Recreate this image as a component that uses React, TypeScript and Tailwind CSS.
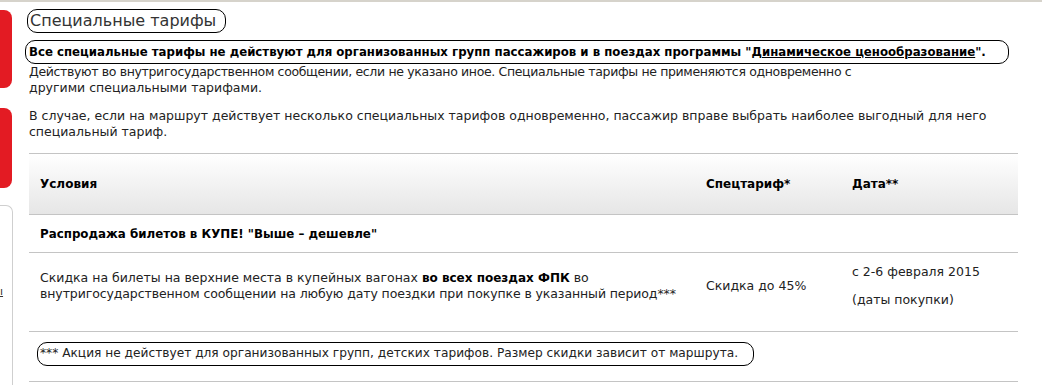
import React from "react";

const font = { fontFamily: '"DejaVu Sans", Verdana, sans-serif' };

export default function App() {
  return (
    <div
      className="w-[1042px] h-[385px] overflow-hidden bg-white text-[12.5px] leading-[16px] text-[#222] border-t-2 border-[#d6d3cb] flex"
      style={font}
    >
      {/* left sidebar */}
      <div className="w-[13px] shrink-0 flex flex-col">
        <div className="mt-[8px] h-[78px] w-[12px] rounded-r-[8px] bg-[#e31b23]" />
        <div className="mt-[20px] h-[80px] w-[12px] rounded-r-[8px] bg-[#e31b23]" />
        <div className="mt-[17px] flex-1 border-t border-r border-[#cfcfcf] rounded-tr-[7px] relative">
          <span className="absolute left-[0px] top-[78px] text-[11px] underline text-[#333]">ı</span>
        </div>
      </div>

      {/* main */}
      <div className="flex-1 flex flex-col">
        <div className="mt-[7px] ml-[14px] self-start h-[24px] pl-[2px] pr-[9px] border border-black rounded-[10px] text-[16px] leading-[22px] text-[#333]">
          Специальные тарифы
        </div>
        <div className="mt-[7px] ml-[12px] w-[984px] h-[24px] border border-black rounded-[10px] pl-[3px] text-[11.75px] leading-[22px] font-bold text-black whitespace-nowrap">
          Все специальные тарифы не действуют для организованных групп пассажиров и в поездах программы "
          <span className="underline">Динамическое ценообразование</span>".
        </div>
        <div className="ml-[16px] whitespace-nowrap">
          <div className="tracking-[-0.35px]">
            Действуют во внутригосударственном сообщении, если не указано иное. Специальные тарифы не применяются одновременно с
          </div>
          <div>другими специальными тарифами.</div>
        </div>
        <div className="mt-[12px] ml-[16px] whitespace-nowrap">
          <div>В случае, если на маршрут действует несколько специальных тарифов одновременно, пассажир вправе выбрать наиболее выгодный для него</div>
          <div>специальный тариф.</div>
        </div>

        {/* table */}
        <div className="mt-[13px] ml-[16px] w-[989px] border-t border-[#c4c4c4]">
          <div className="h-[61px] flex items-center text-[12px] font-bold text-black bg-gradient-to-b from-white to-[#e6e6e6] border-b border-[#c4c4c4]">
            <div className="w-[666px] pl-[11px]">Условия</div>
            <div className="w-[146px] pl-[11px]">Спецтариф*</div>
            <div className="flex-1 pl-[11px]">Дата**</div>
          </div>
          <div className="h-[38px] flex items-center text-[11.85px] font-bold text-black border-b border-[#c4c4c4]">
            <div className="pl-[11px]">Распродажа билетов в КУПЕ! "Выше – дешевле"</div>
          </div>
          <div className="h-[79px] pb-[12px] flex items-center border-b border-[#c4c4c4]">
            <div className="w-[666px] pl-[11px] whitespace-nowrap">
              <div>
                Скидка на билеты на верхние места в купейных вагонах{" "}
                <b className="text-black text-[12px]">во всех поездах ФПК</b> во
              </div>
              <div className="tracking-[-0.1px]">внутригосударственном сообщении на любую дату поездки при покупке в указанный период***</div>
            </div>
            <div className="w-[146px] pl-[11px]">Скидка до 45%</div>
            <div className="flex-1 pl-[11px] flex flex-col gap-[12px]">
              <div>с 2-6 февраля 2015</div>
              <div>(даты покупки)</div>
            </div>
          </div>
          <div className="h-[50px] pb-[5px] flex items-center border-b border-[#c4c4c4]">
            <div className="ml-[8px] h-[24px] border border-black rounded-[10px] pl-[2px] pr-[15px] text-[12.2px] leading-[20px] whitespace-nowrap">
              *** Акция не действует для организованных групп, детских тарифов. Размер скидки зависит от маршрута.
            </div>
          </div>
        </div>
      </div>
    </div>
  );
}
